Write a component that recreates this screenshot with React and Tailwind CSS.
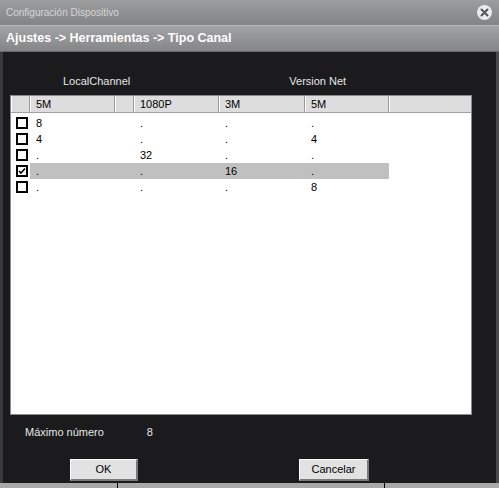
import React from "react";

const rows = [
  { c: false, v: ["8", ".", ".", "."] },
  { c: false, v: ["4", ".", ".", "4"] },
  { c: false, v: [".", "32", ".", "."] },
  { c: true, v: [".", ".", "16", "."] },
  { c: false, v: [".", ".", ".", "8"] },
];

function Check({ checked }) {
  return (
    <div className="w-[12px] h-[12px] border-2 border-black bg-white flex items-center justify-center">
      {checked && (
        <svg width="8" height="8" viewBox="0 0 8 8">
          <path d="M1 4 L3 6 L7 1.5" stroke="black" strokeWidth="1.6" fill="none" />
        </svg>
      )}
    </div>
  );
}

function HeadCell({ w, children }) {
  return (
    <div
      className={`${w} h-full flex items-center pl-[5px] border-r border-r-[#9a9a9a] border-l border-l-white`}
    >
      {children}
    </div>
  );
}

export default function App() {
  return (
    <div
      className="w-[499px] h-[488px] bg-[#1b1b1d] flex flex-col overflow-hidden"
      style={{ fontFamily: '"Liberation Sans", Arial, sans-serif' }}
    >
      {/* title bar */}
      <div className="h-[25px] bg-gradient-to-b from-[#9c9d9f] to-[#838486] flex items-center justify-between pl-[6px] pr-[7px]">
        <span className="text-[10px] text-[#d6d6d6]">Configuración Dispositivo</span>
        <div className="w-[15px] h-[15px] rounded-full bg-[#ececec] flex items-center justify-center">
          <svg width="9" height="9" viewBox="0 0 9 9">
            <path d="M1.5 1.5 L7.5 7.5 M7.5 1.5 L1.5 7.5" stroke="#555" strokeWidth="2" strokeLinecap="round" />
          </svg>
        </div>
      </div>
      <div className="h-[1px] bg-[#b8b9bb]" />
      {/* breadcrumb bar */}
      <div className="h-[26px] bg-gradient-to-b from-[#a2a3a5] to-[#858688] flex items-center pl-[6px] border-b border-[#6a6b6d]">
        <span className="text-[12.5px] font-bold text-white">
          Ajustes -&gt; Herramientas -&gt; Tipo Canal
        </span>
      </div>
      {/* body */}
      <div className="flex-1 flex flex-col border-l-[3px] border-l-[#3a3a3c] border-r-[3px] border-r-[#4a4a4c] pl-[7px]">
        <div className="h-[43px] flex items-end pb-[6px] text-[11px] text-[#e6e6e6]">
          <span className="ml-[53px]">LocalChannel</span>
          <span className="ml-[159px]">Version Net</span>
        </div>
        {/* table */}
        <div className="w-[462px] h-[320px] bg-white border border-[#8a8a8a] flex flex-col">
          <div className="h-[17px] bg-[#dddddd] flex text-[11px] text-black border-b border-[#a0a0a0]">
            <HeadCell w="w-[19px]" />
            <HeadCell w="w-[85px]">5M</HeadCell>
            <HeadCell w="w-[19px]" />
            <HeadCell w="w-[85px]">1080P</HeadCell>
            <HeadCell w="w-[86px]">3M</HeadCell>
            <HeadCell w="w-[84px]">5M</HeadCell>
            <div className="flex-1 h-full border-l border-l-white" />
          </div>
          <div className="pt-[2px]">
            {rows.map((r, i) => (
              <div key={i} className="h-[16px] flex items-center text-[11px] text-black">
                <div className="w-[19px] flex justify-center pl-[2px]">
                  <Check checked={r.c} />
                </div>
                <div className={`flex h-full items-center pt-[1px] ${r.c ? "bg-[#c0c0c0]" : ""}`}>
                  <div className="w-[85px] pl-[6px]">{r.v[0]}</div>
                  <div className="w-[19px]" />
                  <div className="w-[85px] pl-[6px]">{r.v[1]}</div>
                  <div className="w-[86px] pl-[6px]">{r.v[2]}</div>
                  <div className="w-[84px] pl-[6px]">{r.v[3]}</div>
                </div>
              </div>
            ))}
          </div>
        </div>
        <div className="h-[34px] flex items-center text-[11px] text-[#e6e6e6]">
          <span className="ml-[15px]">Máximo número</span>
          <span className="ml-[43px]">8</span>
        </div>
        <div className="flex items-start mt-[10px] h-[23px]">
          <button className="ml-[60px] w-[68px] h-[22px] bg-[#e2e2e2] border-t border-l border-t-white border-l-white border-b-2 border-r-2 border-b-[#7a7a7a] border-r-[#7a7a7a] text-[11px] text-black flex items-center justify-center">
            OK
          </button>
          <button className="ml-[161px] w-[70px] h-[22px] bg-[#e2e2e2] border-t border-l border-t-white border-l-white border-b-2 border-r-2 border-b-[#7a7a7a] border-r-[#7a7a7a] text-[11px] text-black flex items-center justify-center">
            Cancelar
          </button>
        </div>
      </div>
      <div className="h-[5px] bg-[#a9a9a9] flex shrink-0">
        <div className="w-[117px]" />
        <div className="w-[1px] bg-black" />
        <div className="w-[266px]" />
        <div className="w-[1px] bg-black" />
      </div>
    </div>
  );
}
